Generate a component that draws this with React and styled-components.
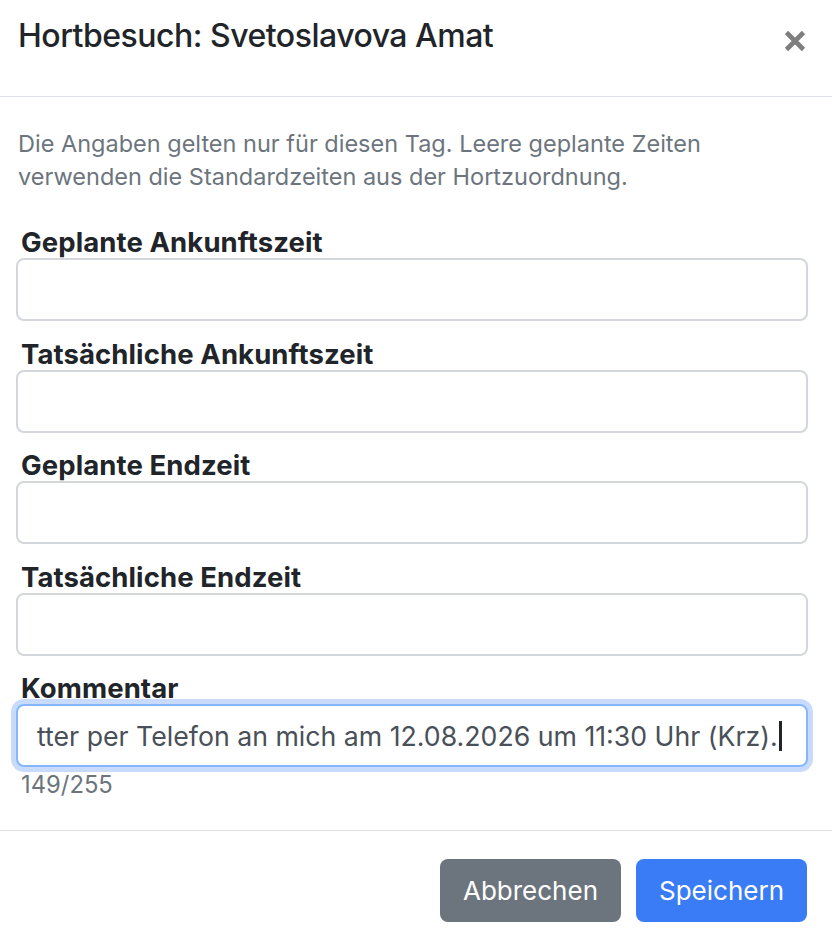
import React from "react";
import styled, { createGlobalStyle } from "styled-components";

const GlobalStyle = createGlobalStyle`
  html, body {
    margin: 0;
    padding: 0;
    background: #fff;
  }
  body {
    font-family: Inter, "Noto Sans", "Liberation Sans", sans-serif;
    color: #212529;
  }
  * {
    box-sizing: border-box;
  }
`;

const fields = [
  { id: "planned-arrival", label: "Geplante Ankunftszeit" },
  { id: "actual-arrival", label: "Tatsächliche Ankunftszeit" },
  { id: "planned-end", label: "Geplante Endzeit" },
  { id: "actual-end", label: "Tatsächliche Endzeit" },
];

const CloseIcon = () => (
  <svg viewBox="0 0 22 22" width="22" height="22" stroke="currentColor" strokeWidth="4.6" strokeLinecap="butt">
    <path d="M2.5 2.5L19.5 19.5M19.5 2.5L2.5 19.5" />
  </svg>
);

export default function App() {
  return (
    <>
      <GlobalStyle />
      <Modal>
        <Header>
          <Title>Hortbesuch: Svetoslavova Amat</Title>
          <CloseButton type="button" aria-label="Schließen">
            <CloseIcon />
          </CloseButton>
        </Header>
        <Body>
          <Hint>
            Die Angaben gelten nur für diesen Tag. Leere geplante Zeiten
            verwenden die Standardzeiten aus der Hortzuordnung.
          </Hint>
          <Form>
            {fields.map((field) => (
              <Group key={field.id}>
                <Label htmlFor={field.id}>{field.label}</Label>
                <Input id={field.id} type="text" />
              </Group>
            ))}
            <Group>
              <Label>Kommentar</Label>
              <CommentBox role="textbox" focused>
                <span>tter per Telefon an mich am 12.08.2026 um 11:30 Uhr (Krz).</span>
                <Caret />
              </CommentBox>
              <Counter>149/255</Counter>
            </Group>
          </Form>
        </Body>
        <Footer>
          <Button variant="secondary">Abbrechen</Button>
          <Button variant="primary">Speichern</Button>
        </Footer>
      </Modal>
    </>
  );
}

const Modal = styled.div`
  width: 832px;
  min-height: 942px;
  background: #fff;
  display: flex;
  flex-direction: column;
`;

const Header = styled.div`
  height: 97px;
  display: flex;
  align-items: flex-start;
  padding: 16px 26px 0 18px;
  border-bottom: 1px solid #dee2e6;
`;

const Title = styled.h5`
  margin: 0;
  font-size: 32px;
  line-height: 40px;
  font-weight: 500;
  letter-spacing: -0.5px;
  color: #212529;
`;

const CloseButton = styled.button`
  margin: 14px 0 0 auto;
  padding: 0;
  width: 22px;
  height: 22px;
  border: 0;
  background: transparent;
  color: #000;
  opacity: 0.5;
  cursor: pointer;
  display: flex;
`;

const Body = styled.div`
  padding: 30px 24px 0 16px;
`;

const Hint = styled.p`
  margin: 0 0 33px 2px;
  font-size: 23.5px;
  line-height: 33px;
  color: #6c757d;
`;

const Form = styled.form`
  display: flex;
  flex-direction: column;
  gap: 16.5px;
`;

const Group = styled.div`
  display: flex;
  flex-direction: column;
`;

const Label = styled.label`
  padding-left: 5px;
  font-size: 27.5px;
  line-height: 32px;
  font-weight: 700;
  letter-spacing: 0.1px;
  color: #212529;
`;

const Input = styled.input`
  height: 63px;
  width: 100%;
  padding: 0 19px;
  font: inherit;
  font-size: 26.7px;
  color: #495057;
  background: #fff;
  border: 2px solid #d3d7dc;
  border-radius: 8px;
  outline: none;
`;

const CommentBox = styled.div`
  height: 63px;
  display: flex;
  align-items: center;
  padding: 0 19px;
  font-size: 26.7px;
  color: #495057;
  white-space: nowrap;
  overflow: hidden;
  background: #fff;
  border: 2px solid ${({ focused }) => (focused ? "#86b7fe" : "#d3d7dc")};
  border-radius: 8px;
  box-shadow: ${({ focused }) => (focused ? "0 0 0 5px #c8dbfd" : "none")};
`;

const Caret = styled.span`
  width: 3px;
  height: 30px;
  margin-left: 1px;
  background: #212529;
`;

const Counter = styled.div`
  margin: 1px 0 0 5px;
  font-size: 23.8px;
  line-height: 33px;
  color: #6c757d;
`;

const Footer = styled.div`
  margin-top: 29px;
  display: flex;
  justify-content: flex-end;
  gap: 15px;
  padding: 28px 25px 20px 0;
  border-top: 1px solid #dee2e6;
`;

const Button = styled.button`
  height: 63px;
  padding: 0 23px;
  border: 0;
  border-radius: 8px;
  font: inherit;
  font-size: 26px;
  color: #fff;
  background: ${({ variant }) =>
    variant === "primary" ? "#3a7cf6" : "#6c757d"};
  cursor: pointer;
`;
